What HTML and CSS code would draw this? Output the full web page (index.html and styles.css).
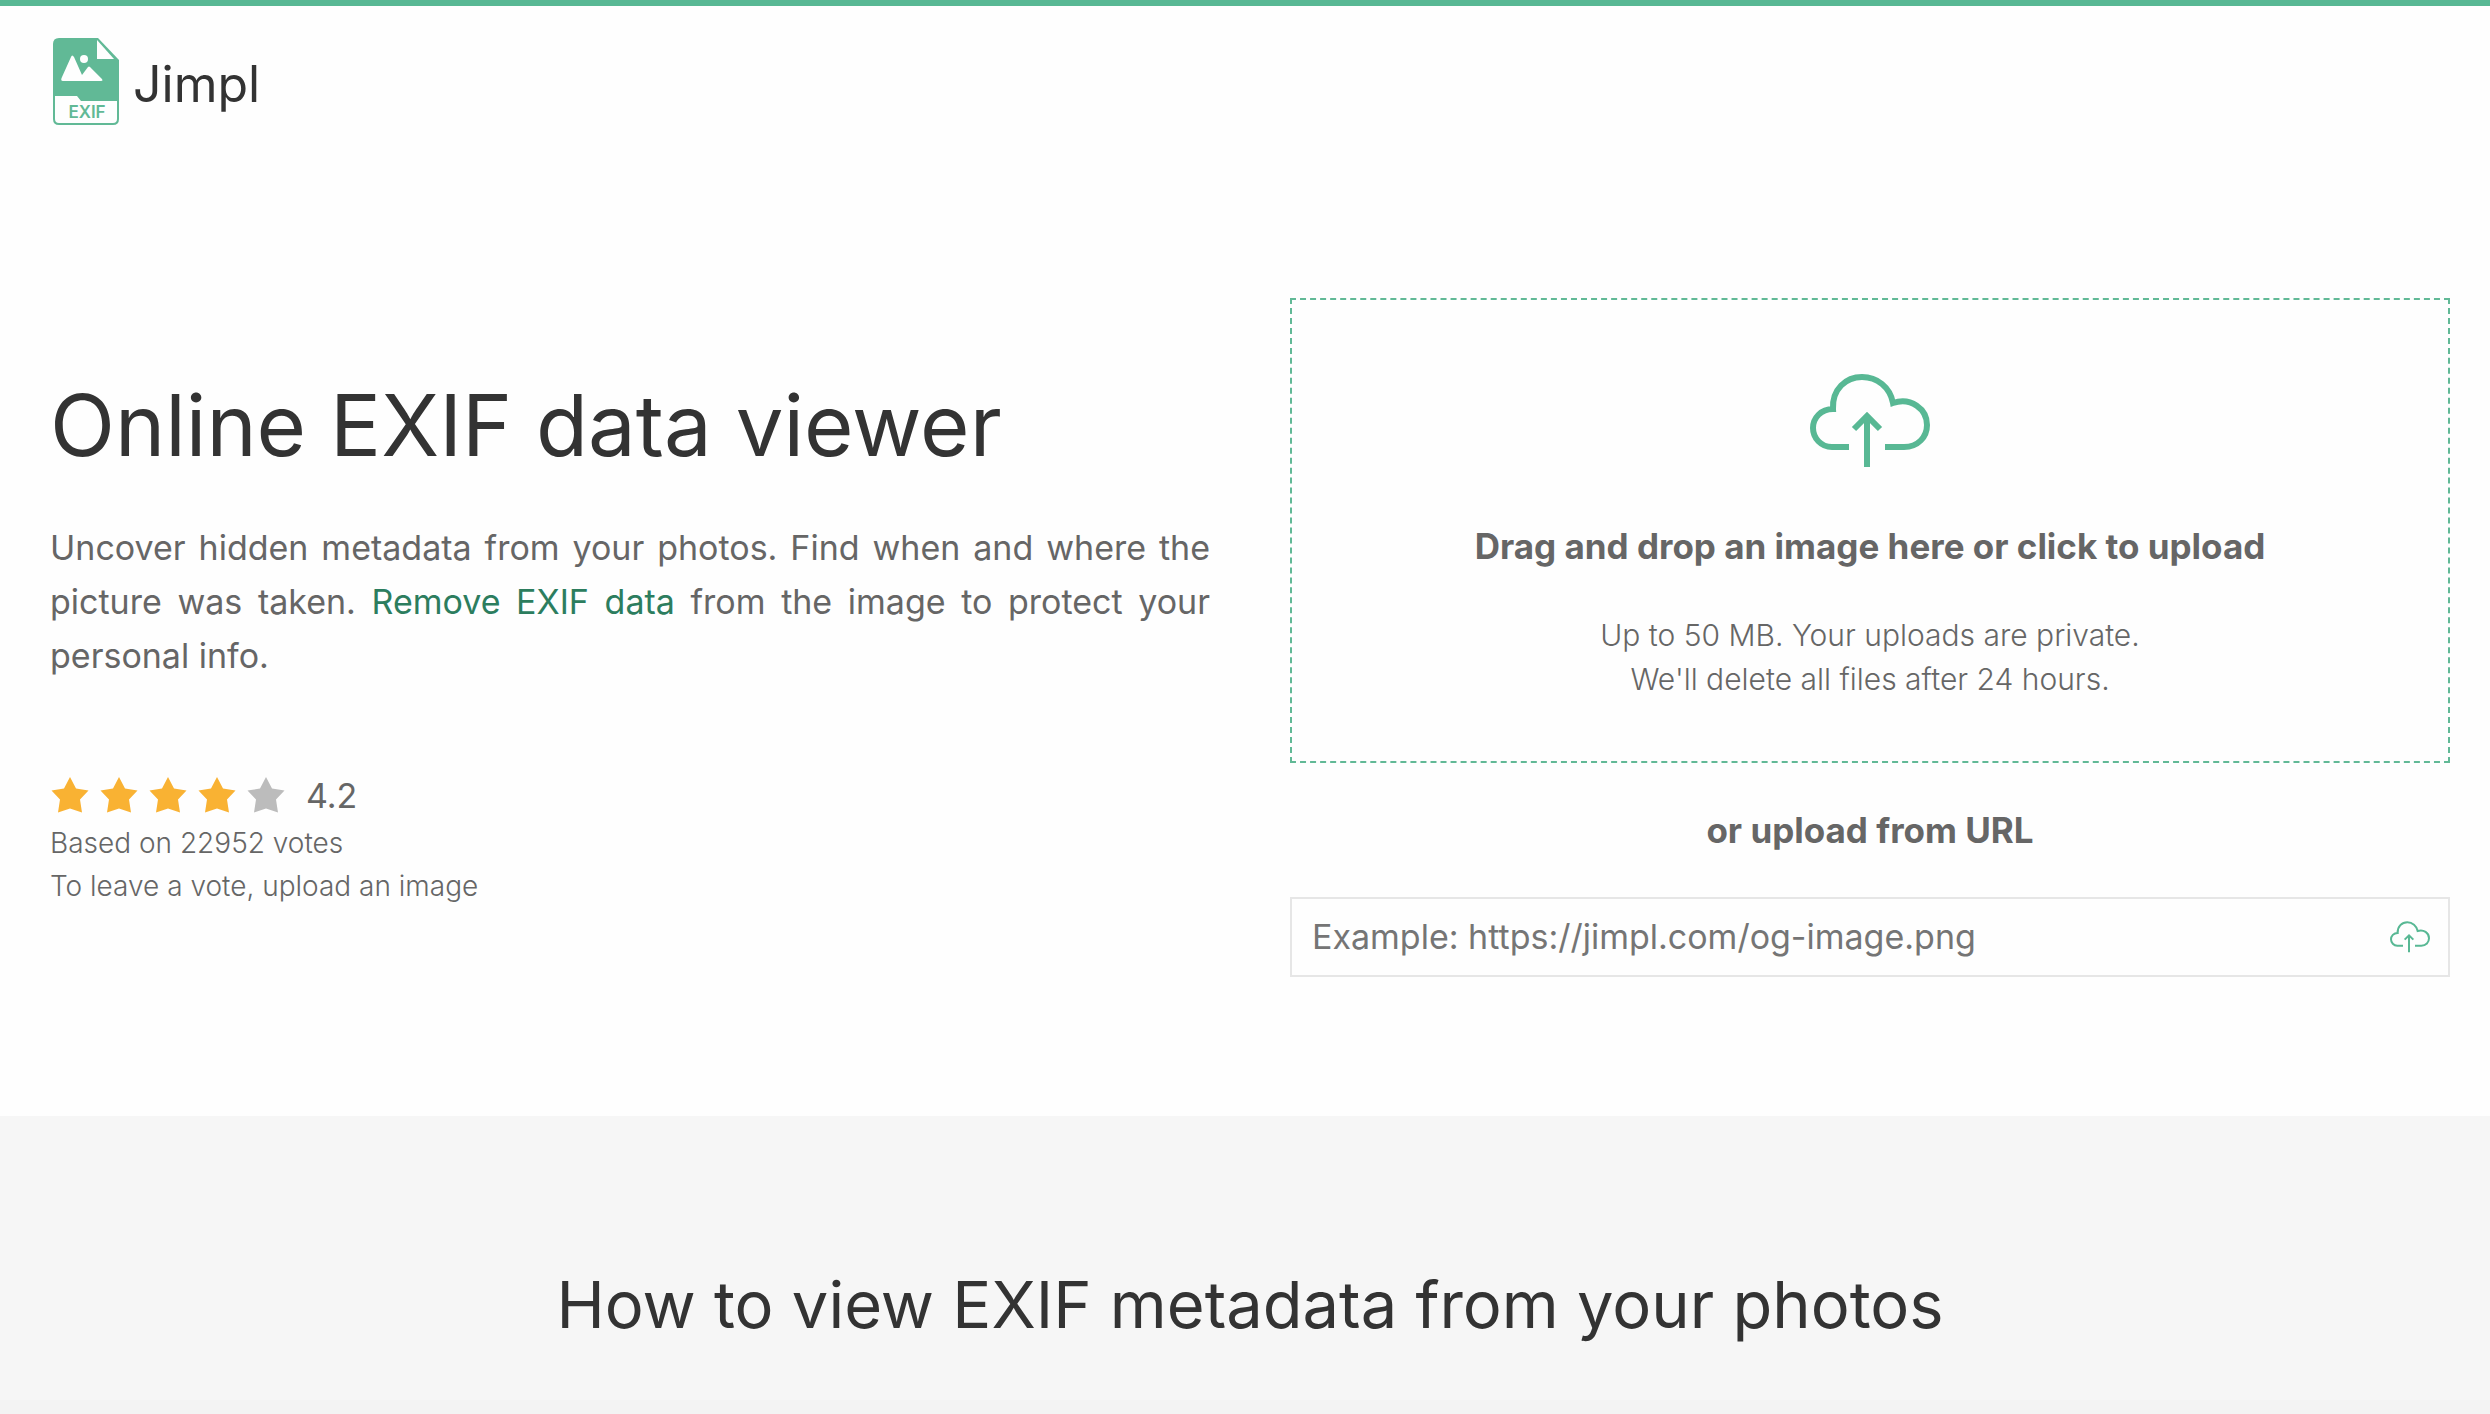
FILE: index.html
```html
<!DOCTYPE html>
<html lang="en">
<head>
<meta charset="utf-8">
<meta name="viewport" content="width=device-width, initial-scale=1">
<title>Jimpl - Online EXIF data viewer</title>
<link rel="stylesheet" href="styles.css">
</head>
<body>
<svg class="defs" width="0" height="0" aria-hidden="true">
  <symbol id="cloud" viewBox="0 0 120 94">
    <path d="M39 73H22C11 73 3 64 3 54c0-10 8-19 20-19C22 15 36 3 52 3c15 0 28 10 31 26 18-6 34 6 34 22 0 12-9 22-23 22H75"/>
    <path d="M57 93V43M44 55l13-13 13 13"/>
  </symbol>
  <symbol id="star" viewBox="0 0 38 36">
    <path d="M19 0l6 11.500 12.500 2-8.500 9 2 13L19 31.500 7 35.500l2-13-8.500-9 12.500-2z"/>
  </symbol>
</svg>

<header class="header">
  <a class="brand" href="/">
    <svg class="brand-icon" viewBox="0 0 66 87" aria-hidden="true">
      <path class="file" d="M6 0h39l21 22v59q0 6-6 6H6q-6 0-6-6V6q0-6 6-6z"/>
      <path class="cut" d="M44 2v19h17z"/>
      <path class="cut" d="M10 43q-3 0-1-4l9-20q1-3 3 0l8 18 6-8q1-1 2 0l11 11q3 3 0 3z"/>
      <circle class="cut" cx="31" cy="21" r="4"/>
      <path class="cut" d="M2 58h22l4 5h36v18q0 4-4 4H6q-4 0-4-4z"/>
      <text class="tag" x="34" y="80" text-anchor="middle">EXIF</text>
    </svg>
    <span class="brand-name">Jimpl</span>
  </a>
</header>

<main>
  <section class="hero">
    <div class="intro">
      <h1>Online EXIF data viewer</h1>
      <p class="lead">Uncover hidden metadata from your photos. Find when and where the picture was taken. <a href="#remove">Remove EXIF data</a> from the image to protect your personal info.</p>
      <div class="rating">
        <div class="stars">
          <svg class="star"><use href="#star"/></svg>
          <svg class="star"><use href="#star"/></svg>
          <svg class="star"><use href="#star"/></svg>
          <svg class="star"><use href="#star"/></svg>
          <svg class="star off"><use href="#star"/></svg>
          <span class="score">4.2</span>
        </div>
        <p>Based on 22952 votes</p>
        <p>To leave a vote, upload an image</p>
      </div>
    </div>

    <form class="upload">
      <button class="dropzone" type="button">
        <svg class="drop-icon" aria-hidden="true"><use href="#cloud"/></svg>
        <strong class="drop-title">Drag and drop an image here or click to upload</strong>
        <span class="drop-note">Up to 50 MB. Your uploads are private.<br>We'll delete all files after 24 hours.</span>
      </button>
      <label class="url-label" for="url">or upload from URL</label>
      <div class="url-box">
        <input id="url" type="url" placeholder="Example: https://jimpl.com/og-image.png">
        <button class="url-send" type="submit" aria-label="Upload">
          <svg class="send-icon" aria-hidden="true"><use href="#cloud"/></svg>
        </button>
      </div>
    </form>
  </section>

  <section class="howto">
    <h2>How to view EXIF metadata from your photos</h2>
  </section>
  <section class="steps"></section>
</main>
</body>
</html>
```
FILE: styles.css
```css
* { box-sizing: border-box; }

body {
  display: flex;
  flex-direction: column;
  min-height: 100vh;
  margin: 0;
  border-top: 6px solid #58b894;
  background: #fefefe;
  color: #666;
  font-family: Inter, "Liberation Sans", sans-serif;
  font-size: 34px;
  line-height: 54px;
}

main { display: flex; flex: 1; flex-direction: column; }

h1, h2, p { margin: 0; }
h1, h2 { color: #333; font-weight: 400; }

.defs { position: absolute; }

.header, .hero { padding: 0 40px 0 50px; }

.header { padding-top: 32px; }

.brand {
  display: flex;
  align-items: center;
  gap: 14px;
  width: fit-content;
  padding-left: 3px;
  color: #333;
  font-size: 50px;
  text-decoration: none;
}

.brand-icon { width: 66px; height: 87px; }
.brand-name { padding-top: 4px; }
.file { fill: #61b996; }
.cut { fill: #fefefe; }
.tag { fill: #61b996; font: 600 17px Inter, sans-serif; }

.hero {
  display: grid;
  grid-template-columns: 1fr 1fr;
  gap: 80px;
  padding-top: 173px;
  padding-bottom: 139px;
}

.intro { padding-top: 72px; }

h1 { font-size: 85px; line-height: 112px; }

.lead { margin-top: 39px; text-align: justify; }
.lead a { color: #2c7d5e; text-decoration: none; }

.rating { margin-top: 85px; font-size: 28px; font-weight: 300; line-height: 43px; }

.stars { display: flex; align-items: center; gap: 11px; height: 54px; padding-left: 1px; }
.star { width: 38px; height: 36px; fill: #f9b233; }
.star.off { fill: #bcbcbc; }
.score { margin-left: 10px; font-size: 34px; font-weight: 400; }

.upload { display: flex; flex-direction: column; }

.dropzone {
  display: flex;
  flex-direction: column;
  align-items: center;
  padding: 74px 20px 60px;
  border: 2px dashed #61b996;
  background: none;
  color: inherit;
  font: inherit;
  cursor: pointer;
}

.drop-icon, .send-icon { fill: none; stroke: #58b894; }
.drop-icon { width: 120px; height: 94px; stroke-width: 6px; }
.drop-title, .url-label { font-size: 35px; font-weight: 700; }
.drop-title { margin-top: 51px; }
.drop-note { margin-top: 40px; font-size: 30px; font-weight: 300; line-height: 44px; }

.url-label { margin: 40px 0; text-align: center; }

.url-box { display: flex; height: 80px; border: 2px solid #e6e6e6; }

.url-box input {
  flex: 1;
  min-width: 0;
  padding: 0 20px;
  border: 0;
  background: none;
  color: #666;
  font: inherit;
}
.url-box input::placeholder { color: #757575; opacity: 1; }

.url-send {
  display: flex;
  align-items: center;
  padding: 0 18px;
  border: 0;
  background: none;
}
.send-icon { width: 40px; height: 32px; stroke-width: 6px; }

.howto {
  padding: 147px 40px 53px 50px;
  background: #f6f6f6;
  text-align: center;
}

.steps { flex: 1; background: #f3f3f3; }

h2 { font-size: 65px; line-height: 84px; }
```
